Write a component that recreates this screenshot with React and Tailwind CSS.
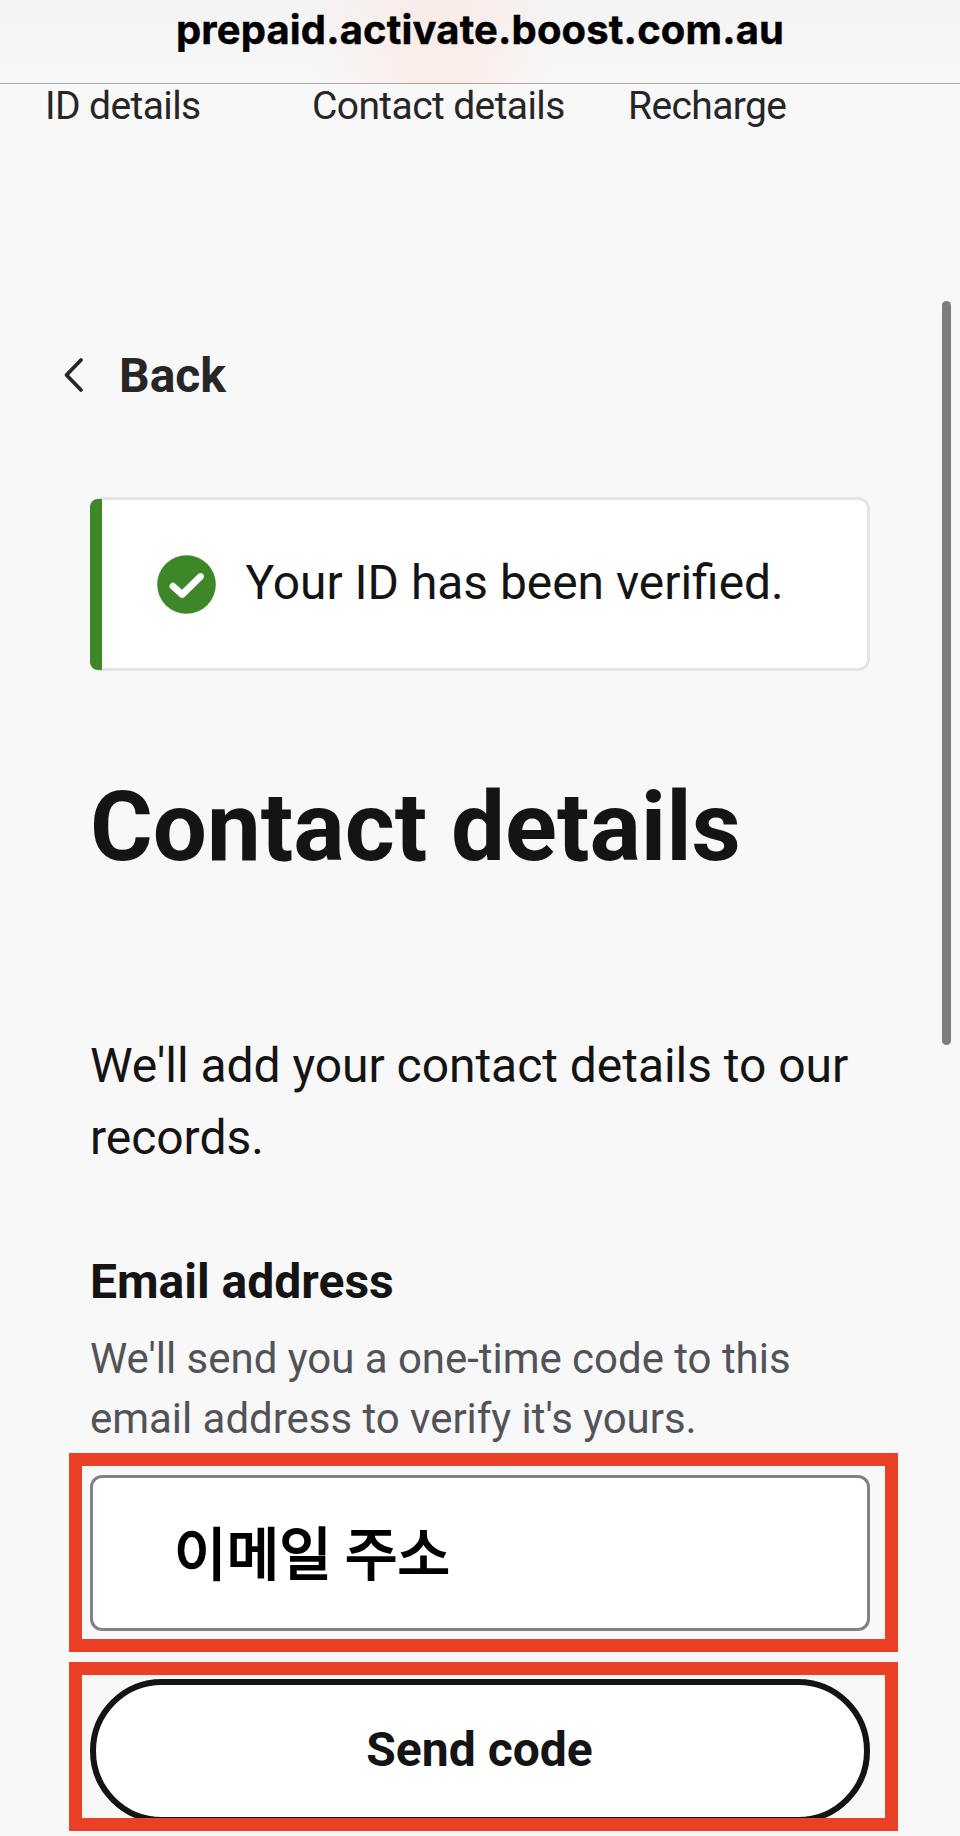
const steps = [
  { label: 'ID details', width: 'w-[267px]' },
  { label: 'Contact details', width: 'w-[316px]' },
  { label: 'Recharge', width: 'w-auto' },
];

function AddressBar() {
  return (
    <header className="h-[84px] border-b border-[#a9a9a9] bg-linear-to-b from-[#f3f3f3] to-[#f8f8f8]">
      <div className="flex h-full justify-center bg-[linear-gradient(to_right,transparent_32%,#fbebe6cc_43%,#fbebe6cc_49%,transparent_58%)]">
        <span className="font-[Inter,sans-serif] text-[40px] leading-[59px] font-bold tracking-[0.15px] whitespace-nowrap text-black [-webkit-text-stroke:0.4px_#000]">
          prepaid.activate.boost.com.au
        </span>
      </div>
    </header>
  );
}

function Steps() {
  return (
    <nav className="flex pl-[45px] text-[39px] leading-[44px] tracking-[-0.6px] text-[#262626]">
      {steps.map((step) => (
        <span key={step.label} className={step.width}>
          {step.label}
        </span>
      ))}
    </nav>
  );
}

function VerifiedAlert() {
  return (
    <div className="relative mt-[85px] flex h-[174px] items-center gap-[30px] rounded-[12px] border-[3px] border-[#e5e5e5] bg-white pl-[63.5px] text-[47.9px]">
      {/* Green accent on the left edge */}
      <div className="absolute -top-[1.5px] -bottom-[1.5px] -left-[3px] w-3 rounded-l-[8px] bg-[#3d8728]" />
      <svg viewBox="0 0 59 59" className="h-[59px] w-[59px] shrink-0" fill="none">
        <circle cx="29.5" cy="29.5" r="29.3" fill="#3d8728" />
        <path d="M16 31.2L25.2 39.5L43.5 21.5" stroke="#fff" strokeWidth="6.8" strokeLinecap="round" strokeLinejoin="round" />
      </svg>
      <p className="pb-[3px] leading-[72px] whitespace-nowrap">Your ID has been verified.</p>
    </div>
  );
}

export default function App() {
  return (
    <div className="relative h-[1836px] w-[960px] overflow-hidden bg-[#f8f8f8] font-[Roboto,sans-serif] text-[#141414]">
      <AddressBar />
      <Steps />

      {/* Scroll indicator */}
      <div className="absolute top-[301px] left-[942px] h-[744px] w-[9px] rounded-full bg-[#7d7d7d]" />

      <main className="px-[90px]">
        <button className="mt-[212px] -ml-[27px] flex items-center text-[48px] leading-[72px] font-bold text-[#262626]">
          <svg viewBox="0 0 22 36" className="mt-[-2px] mr-[34px] h-9 w-[22px]" fill="none">
            <path d="M18 3L3.5 18L18 33" stroke="currentColor" strokeWidth="3.8" strokeLinecap="round" strokeLinejoin="round" />
          </svg>
          Back
        </button>

        <VerifiedAlert />

        <h1 className="mt-24 text-[96px] leading-[120px] font-bold whitespace-nowrap">Contact details</h1>

        <p className="mt-[143px] text-[48px] leading-[72px] tracking-[-0.04px]">
          We'll add your contact details to our
          <br />
          records.
        </p>

        <label className="mt-[72px] block text-[48px] leading-[72px] font-bold">Email address</label>
        <p className="mt-[11px] text-[42px] leading-[60px] tracking-[-0.03px] text-[#515359]">
          We'll send you a one-time code to this
          <br />
          email address to verify it's yours.
        </p>

        <div className="relative mt-[26px] flex h-[156px] items-center rounded-[12px] border-[3px] border-[#808285] bg-white pl-[81px]">
          <span className="pb-[7px] font-['Noto_Sans_CJK_KR',sans-serif] text-[57px] leading-[72px] tracking-[0.2px] text-black [-webkit-text-stroke:2px_#000]">
            이메일 주소
          </span>
          <div className="absolute -top-[25.5px] -right-[30.5px] -bottom-[24px] -left-[24px] border-[13px] border-[#ea4026]" />
        </div>

        <div className="relative mt-12">
          <button className="h-36 w-full rounded-full border-[6px] border-[#141414] bg-white pr-[1px] pb-[2px] text-[48px] leading-[72px] font-bold">
            Send code
          </button>
          <div className="absolute -top-[17px] -right-[28px] left-[-21px] h-[169px] border-[13px] border-[#ea4026]" />
        </div>
      </main>
    </div>
  );
}
